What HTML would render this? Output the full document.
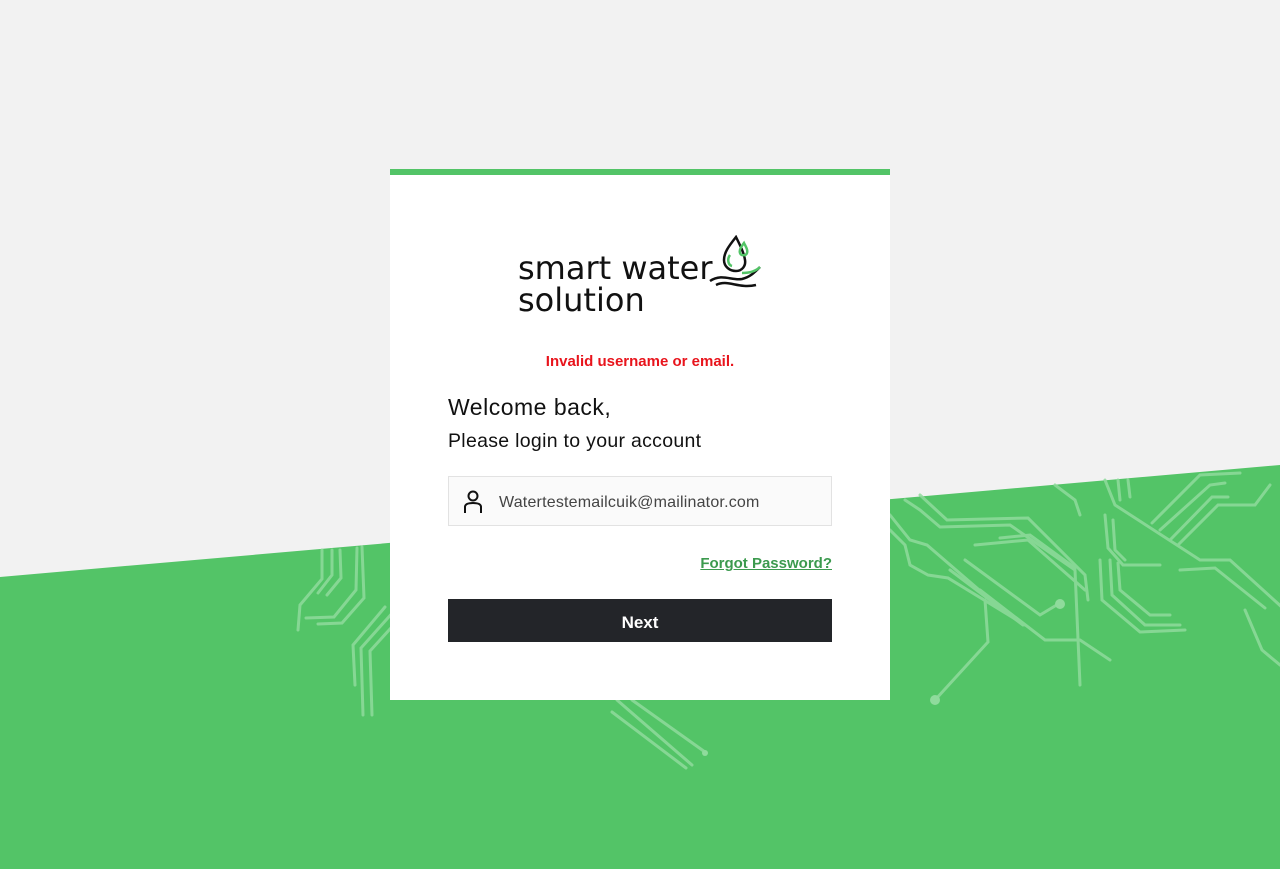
<!DOCTYPE html>
<html><head><meta charset="utf-8"><style>
html,body{margin:0;padding:0;width:1280px;height:869px;overflow:hidden;background:#f2f2f2;font-family:"Liberation Sans",sans-serif}
svg.bg{position:absolute;left:0;top:0}
.card{position:absolute;left:390px;top:169px;width:500px;height:531px;background:#fff;border-top:6px solid #53c467;box-sizing:border-box}
.err{position:absolute;top:178px;width:100%;text-align:center;color:#e8141c;font-size:15px;font-weight:bold}
.h1{position:absolute;left:58px;top:219px;font-size:23px;letter-spacing:0.5px;color:#111}
.h2{position:absolute;left:58px;top:255px;font-size:19.5px;letter-spacing:0.3px;color:#111}
.inp{position:absolute;left:58px;top:301px;width:384px;height:50px;box-sizing:border-box;border:1px solid #e2e2e2;background:#fafafa}
.inp span{position:absolute;left:50px;top:17px;font-size:16px;letter-spacing:0.2px;color:#444}
.fp{position:absolute;right:58px;top:380px;font-size:15px;font-weight:bold;color:#3c9a4e;text-decoration:underline}
.btn{position:absolute;left:58px;top:424px;width:384px;height:43px;background:#232529;color:#fff;font-weight:bold;font-size:17px;text-align:center;line-height:47px}
.logo{position:absolute;left:128px;top:77px;font-size:32px;line-height:32px;color:#111;font-family:"DejaVu Sans","Liberation Sans",sans-serif}
</style></head><body>
<svg class="bg" width="1280" height="869">
<polygon points="0,577 1280,465 1280,869 0,869" fill="#53c467"/>
<g stroke="#8fdb9c" stroke-width="3" fill="none" stroke-linecap="round" opacity="0.85">
<polyline points="298,630 300,605 322,579 322,550"/>
<polyline points="306,618 334,617 356,590 357,548"/>
<polyline points="318,624 342,623 364,598 362,547"/>
<polyline points="318,593 332,575 332,550"/>
<polyline points="327,595 341,578 340,550"/>
<polyline points="355,685 353,645 385,607"/>
<polyline points="363,715 361,648 395,610"/>
<polyline points="372,715 370,651 400,618"/>
<polyline points="617,700 692,765"/>
<polyline points="632,700 705,752"/>
<polyline points="612,712 686,768"/>
<polyline points="890,515 910,540 927,545 985,595"/>
<polyline points="890,530 905,545 910,565 928,575 948,578 1025,625"/>
<polyline points="920,495 947,520 1028,518 1085,575 1088,600"/>
<polyline points="905,500 920,510 940,527 1010,525 1075,570 1080,685"/>
<polyline points="1000,538 1030,535 1075,568"/>
<polyline points="975,545 1028,540 1085,590"/>
<polyline points="965,560 1040,615 1060,603"/>
<polyline points="980,590 1045,640 1080,640 1110,660"/>
<polyline points="950,570 1023,625"/>
<polyline points="935,700 988,642 985,600"/>
<polyline points="1055,485 1075,500 1080,515"/>
<polyline points="1105,480 1115,505 1200,560 1230,560 1285,610"/>
<polyline points="1118,480 1120,500"/>
<polyline points="1128,480 1130,497"/>
<polyline points="1105,515 1108,548 1123,565 1160,565"/>
<polyline points="1113,520 1115,550 1125,560"/>
<polyline points="1100,560 1102,600 1140,632 1185,630"/>
<polyline points="1110,560 1112,595 1145,625 1180,625"/>
<polyline points="1118,563 1120,590 1150,615 1170,615"/>
<polyline points="1180,570 1215,568 1265,608"/>
<polyline points="1152,523 1200,475 1240,473"/>
<polyline points="1160,530 1210,485 1225,483"/>
<polyline points="1170,540 1212,497 1228,497"/>
<polyline points="1178,545 1218,505 1255,505 1270,485"/>
<polyline points="1245,610 1262,650 1280,665"/>
</g>
<circle cx="935" cy="700" r="5" fill="#8fdb9c"/>
<circle cx="1060" cy="604" r="5" fill="#8fdb9c"/>
<circle cx="705" cy="753" r="3" fill="#8fdb9c"/>
</svg>
<div class="card">
<div class="logo">smart water<br>solution</div>
<svg style="position:absolute;left:318px;top:60px" width="56" height="58" viewBox="0 0 56 58">
<path d="M28 2 C20 12 16 18 16 25 C16 32 22 36 28 36 C34 36 38 31 37 25 C36 18 32 10 28 2Z" fill="none" stroke="#111" stroke-width="2.5"/>
<path d="M36 8 C33 12 31 15 32 18 C33 21 38 21 39 18 C40 15 38 12 36 8Z" fill="none" stroke="#53c467" stroke-width="2.5"/>
<path d="M22 20 C19 24 20 30 24 31" fill="none" stroke="#53c467" stroke-width="2.5"/>
<path d="M2 46 C14 38 24 46 34 44 C42 42 46 38 52 32" fill="none" stroke="#111" stroke-width="2.5"/>
<path d="M8 50 C20 44 30 54 48 50" fill="none" stroke="#111" stroke-width="2.5"/>
<path d="M34 38 C42 38 48 36 52 32" fill="none" stroke="#53c467" stroke-width="2.5"/>
</svg>
<div class="err">Invalid username or email.</div>
<div class="h1">Welcome back,</div>
<div class="h2">Please login to your account</div>
<div class="inp">
<svg style="position:absolute;left:13px;top:13px" width="22" height="24" viewBox="0 0 22 24"><circle cx="11" cy="6" r="4.5" fill="none" stroke="#111" stroke-width="2"/><path d="M3 23 V17 C3 14 6 13 11 13 C16 13 19 14 19 17 V23" fill="none" stroke="#111" stroke-width="2"/></svg>
<span>Watertestemailcuik@mailinator.com</span></div>
<div class="fp">Forgot Password?</div>
<div class="btn">Next</div>
</div>
</body></html>
